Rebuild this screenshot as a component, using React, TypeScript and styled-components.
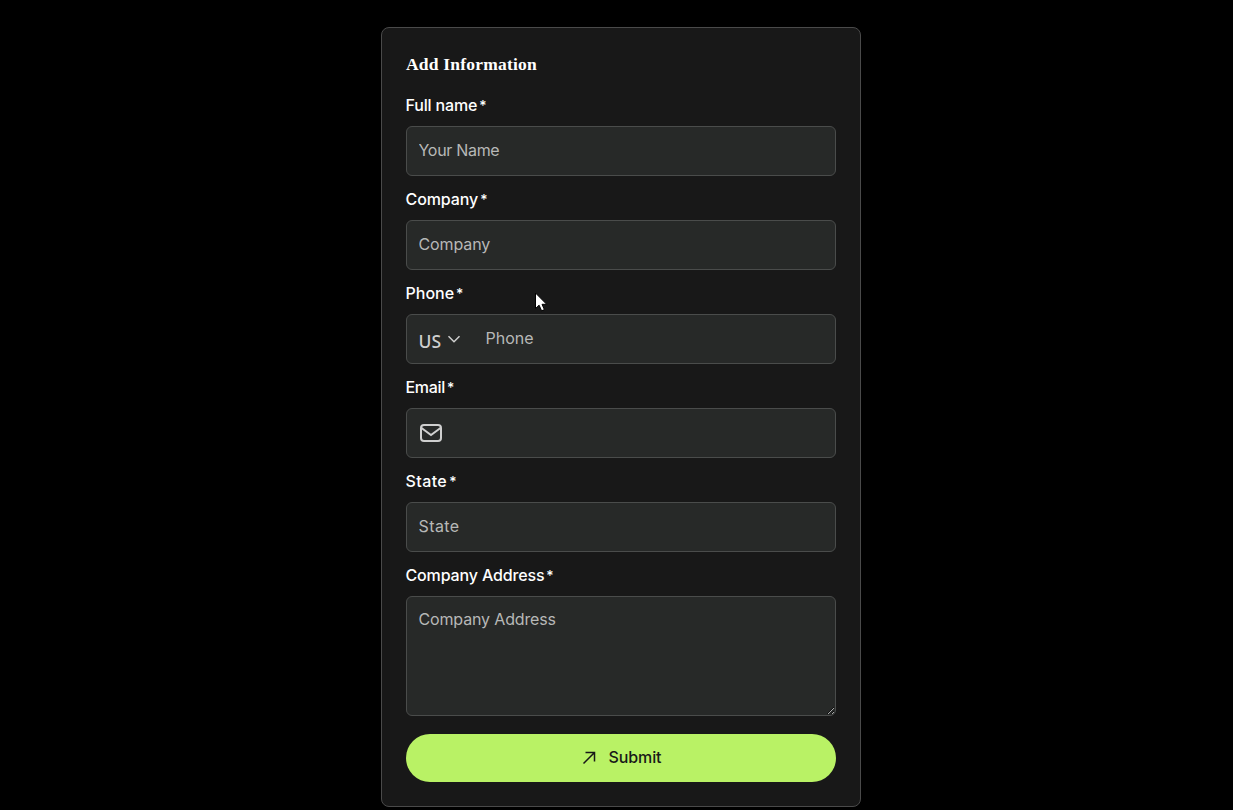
import React from 'react';
import styled, { createGlobalStyle } from 'styled-components';

interface FieldProps {
  label: string;
  spacing?: string;
  children: React.ReactNode;
}

const GlobalStyle = createGlobalStyle`
  *, *::before, *::after {
    box-sizing: border-box;
  }

  body {
    margin: 0;
    background: #000;
    color: #fff;
    font-family: Inter, 'Liberation Sans', sans-serif;
    font-size: 16px;
    line-height: 24px;
    overflow: hidden;
  }
`;

const Page = styled.main`
  position: relative;
  display: flex;
  justify-content: center;
  height: 810px;
  padding: 27px 0 0 9px;
`;

const Card = styled.form`
  display: flex;
  flex-direction: column;
  gap: 12px;
  width: 480px;
  height: 780px;
  padding: 24px;
  background: #181818;
  border: 1px solid #4a4a4a;
  border-radius: 8px;
`;

const Title = styled.h1`
  height: 24px;
  margin: 0 0 6px;
  font-family: 'Liberation Serif', serif;
  font-size: 17.5px;
  font-weight: 700;
  line-height: 24px;
  letter-spacing: 0.2px;
`;

const FieldWrapper = styled.div`
  display: flex;
  flex-direction: column;
  gap: 8px;
`;

const Label = styled.label<{ $spacing: string }>`
  height: 24px;
  margin-left: -0.5px;
  font-weight: 500;
  line-height: 23px;
  letter-spacing: ${({ $spacing }) => $spacing};
`;

const Required = styled.span`
  margin-left: 2px;
  font-size: 14px;
  letter-spacing: 0;
`;

const Control = styled.div`
  display: flex;
  align-items: center;
  height: 50px;
  padding: 0 11.5px;
  background: #272928;
  border: 1px solid #4a4c4b;
  border-radius: 6px;
  color: #cfcfcf;
`;

const Input = styled.input<{ $spacing?: string }>`
  flex: 1;
  min-width: 0;
  height: 48px;
  padding: 0 0 2px;
  background: transparent;
  border: 0;
  outline: 0;
  color: #fff;
  font: inherit;
  letter-spacing: ${({ $spacing }) => $spacing || '0'};

  &::placeholder {
    color: #b7b8b7;
    opacity: 1;
  }
`;

const TextArea = styled.textarea`
  display: block;
  width: 100%;
  height: 120px;
  padding: 10px 11.5px;
  background: #272928;
  border: 1px solid #4a4c4b;
  border-radius: 6px;
  outline: 0;
  color: #fff;
  font: inherit;
  letter-spacing: -0.15px;
  resize: vertical;

  &::placeholder {
    color: #b7b8b7;
    opacity: 1;
  }
`;

const Country = styled.div`
  display: flex;
  align-items: center;
  width: 67px;
  font-family: 'Noto Sans', sans-serif;
  font-size: 17.5px;
  font-weight: 500;
`;

const CountryCode = styled.span`
  margin-top: 3px;
`;

const Chevron = styled.svg`
  margin-left: 6px;
`;

const MailIcon = styled.svg`
  margin-left: 0.5px;
`;

const SubmitButton = styled.button`
  display: flex;
  align-items: center;
  justify-content: center;
  gap: 12px;
  height: 48px;
  margin-top: 6px;
  padding: 0 0 2px;
  background: #b9f265;
  border: 0;
  border-radius: 24px;
  color: #181818;
  font: inherit;
  font-weight: 500;
  letter-spacing: -0.1px;
`;

const ArrowIcon = styled.svg`
  margin-top: 2px;
`;

const Pointer = styled.svg`
  position: absolute;
  top: 292px;
  left: 534px;
`;

function Field({ label, spacing = '0', children }: FieldProps): React.ReactElement {
  return (
    <FieldWrapper>
      <Label $spacing={spacing}>
        {label}
        <Required>*</Required>
      </Label>
      {children}
    </FieldWrapper>
  );
}

export default function App(): React.ReactElement {
  return (
    <Page>
      <GlobalStyle />
      <Card>
        <Title>Add Information</Title>
        <Field label="Full name" spacing="-0.15px">
          <Control>
            <Input placeholder="Your Name" $spacing="-0.3px" />
          </Control>
        </Field>
        <Field label="Company" spacing="-0.1px">
          <Control>
            <Input placeholder="Company" $spacing="-0.1px" />
          </Control>
        </Field>
        <Field label="Phone">
          <Control>
            <Country>
              <CountryCode>US</CountryCode>
              <Chevron width="14" height="14" viewBox="0 0 14 14" fill="none" stroke="currentColor" strokeWidth="1.5">
                <path d="M1.5 4.2 7 9.7l5.5-5.5" />
              </Chevron>
            </Country>
            <Input placeholder="Phone" />
          </Control>
        </Field>
        <Field label="Email" spacing="-0.3px">
          <Control>
            <MailIcon width="24" height="24" viewBox="0 0 24 24" fill="none" stroke="currentColor" strokeWidth="2">
              <rect x="2" y="4" width="20" height="16" rx="3" />
              <path d="m2.5 7 9.5 7 9.5-7" />
            </MailIcon>
            <Input />
          </Control>
        </Field>
        <Field label="State" spacing="0.4px">
          <Control>
            <Input placeholder="State" $spacing="0.4px" />
          </Control>
        </Field>
        <Field label="Company Address" spacing="-0.15px">
          <TextArea placeholder="Company Address" />
        </Field>
        <SubmitButton type="button">
          <ArrowIcon width="16" height="16" viewBox="0 0 16 16" fill="none" stroke="currentColor" strokeWidth="1.5">
            <path d="M2.5 13.5 13.5 2.5M4.5 2.5h9v9" />
          </ArrowIcon>
          Submit
        </SubmitButton>
      </Card>
      <Pointer width="14" height="20" viewBox="0 0 14 20">
        <path d="M1.5 1v15.5l3.6-3.3 2.5 5.6 2.8-1.2-2.4-5.3h4.7z" fill="#fff" stroke="#000" />
      </Pointer>
    </Page>
  );
}
